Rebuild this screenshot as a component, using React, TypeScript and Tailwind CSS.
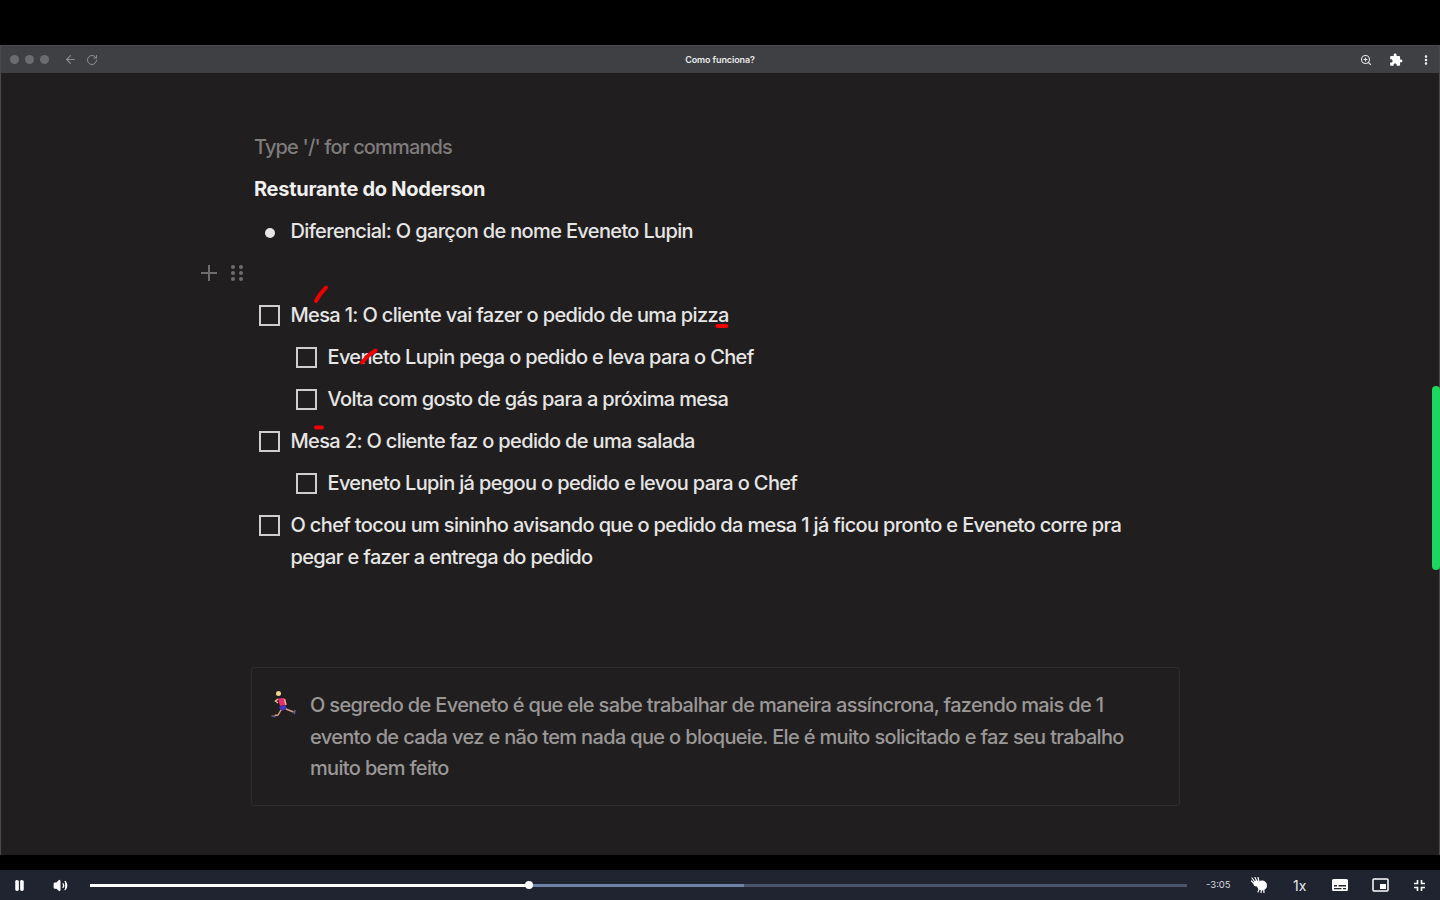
import { ArrowLeft, MoreVertical, Pause, RotateCw, Volume2, ZoomIn } from 'lucide-react'

const font = { fontFamily: 'Inter, sans-serif' }

const CheckRow = ({ text, nested = false }: { text: string; nested?: boolean }) => (
  <div className={`flex items-start ${nested ? 'pl-[42px]' : 'pl-[5px]'}`}>
    <span className="mt-[6px] h-[21px] w-[21px] shrink-0 border-2 border-[#cfcecd]" />
    <p className="ml-[10.500px] w-[860px] text-[20px] font-medium leading-[32px] tracking-[-0.65px] text-[#e6e6e5]">{text}</p>
  </div>
)

const Mark = ({ className, d }: { className: string; d: string }) => (
  <svg className={`absolute ${className}`} width="20" height="20" viewBox="0 0 20 20" fill="none">
    <path d={d} stroke="#f00000" strokeWidth="4" strokeLinecap="round" />
  </svg>
)

const Runner = () => (
  <svg className="shrink-0" width="28" height="28" viewBox="0 0 28 28" fill="none">
    <circle cx="8.500" cy="3.500" r="2.500" fill="#ecd98e" />
    <path d="M8 8.500l6-.5 2 7-6 1z" fill="#ee2a6f" />
    <path d="M8 9l-2.500 2 2.500 2" stroke="#e8b98c" strokeWidth="1.500" />
    <path d="M14.500 9l1.500 6" stroke="#e8b98c" strokeWidth="1.400" />
    <path d="M9 17l6-2 2 4-6 2z" fill="#4b36c4" />
    <path d="M16 19l7.500 3" stroke="#d9a27b" strokeWidth="1.400" />
    <path d="M11 20l-3 5-3.500 .5" stroke="#d9a27b" strokeWidth="1.400" />
    <path d="M25 20l-.8 4" stroke="#5a5a8c" strokeWidth="1.800" />
    <path d="M1.500 25.500l4 1.500" stroke="#5a5a8c" strokeWidth="1.800" />
  </svg>
)

const Extension = () => (
  <svg className="ml-[17px]" width="14" height="14" viewBox="0 0 24 24" fill="white">
    <path d="M20.500 11H19V7c0-1.100-.9-2-2-2h-4V3.500C13 2.120 11.880 1 10.500 1S8 2.120 8 3.500V5H4c-1.100 0-1.990.9-1.990 2v3.800H3.500c1.490 0 2.700 1.210 2.700 2.700s-1.210 2.700-2.700 2.700H2V20c0 1.100.9 2 2 2h3.800v-1.500c0-1.490 1.210-2.700 2.700-2.700 1.490 0 2.700 1.210 2.700 2.700V22H17c1.100 0 2-.9 2-2v-4h1.500c1.380 0 2.500-1.120 2.500-2.500S21.880 11 20.500 11z" />
  </svg>
)

const Hands = () => (
  <svg width="18" height="16" viewBox="0 0 18 16" fill="white">
    <circle cx="11" cy="8.500" r="5" />
    <circle cx="5.500" cy="6.500" r="3" />
    <path d="M1 1l3 4M4 .5l2 4M7 .5l1 4M.5 4l3 3M7 15l1.500-4M10 16l.5-4M13 16l-.3-4" stroke="white" strokeWidth="1.200" strokeLinecap="round" />
  </svg>
)

const Subtitles = () => (
  <svg width="16" height="12" viewBox="0 0 16 12">
    <path fillRule="evenodd" d="M1.500 0h13A1.500 1.500 0 0 1 16 1.500v9a1.500 1.500 0 0 1-1.500 1.500h-13A1.500 1.500 0 0 1 0 10.500v-9A1.500 1.500 0 0 1 1.500 0zM2 6v1.500h3V6zm4.500 0v1.500H14V6zM2 9v1.300h7.500V9zm9 0v1.300h3V9z" fill="white" />
  </svg>
)

const Pip = () => (
  <svg width="17" height="14" viewBox="0 0 17 14" fill="none">
    <rect x="1" y="1" width="15" height="12" rx="1" stroke="white" strokeWidth="1.500" />
    <rect x="8" y="6" width="6" height="5" fill="white" />
  </svg>
)

const Shrink = () => (
  <svg width="11" height="11" viewBox="0 0 11 11" fill="none" stroke="white" strokeWidth="1.600">
    <path d="M3.500 0v3.500H0M7.500 0v3.500H11M3.500 11V7.500H0M7.500 11V7.500H11" />
  </svg>
)

export default function App() {
  return (
    <div className="relative flex h-[900px] w-[1440px] flex-col overflow-hidden bg-black" style={font}>
      <div className="mt-[45px] flex h-[810px] flex-col border border-b-0 border-[#4a4a4c] bg-[#211e1f]">
        <header className="relative flex h-[27px] shrink-0 items-center bg-[#3f4044] px-[7px] text-white">
          <div className="ml-[2px] flex items-center gap-[6px]">
            <span className="h-[9px] w-[9px] rounded-full bg-[#6b6c70]" />
            <span className="h-[9px] w-[9px] rounded-full bg-[#6b6c70]" />
            <span className="h-[9px] w-[9px] rounded-full bg-[#6b6c70]" />
          </div>
          <ArrowLeft className="ml-[15px] text-[#8d8e92]" size={13} strokeWidth={2} />
          <RotateCw className="ml-[9px] text-[#8d8e92]" size={12} strokeWidth={2} />
          <span className="absolute left-0 right-0 text-center text-[9px] font-semibold tracking-[-0.1px] text-[#e9e9ea]">Como funciona?</span>
          <div className="ml-auto flex items-center">
            <ZoomIn size={12} strokeWidth={2.200} className="text-[#e6e6e7]" />
            <Extension />
            <MoreVertical size={12} strokeWidth={3} className="ml-[17px] text-white" />
          </div>
        </header>

        <main className="relative flex-1 pl-[253px] pt-[58px]">
          <div className="flex w-[890px] flex-col gap-[10px]">
            <p className="text-[20px] font-medium leading-[32px] tracking-[-0.85px] text-[#7e7c7b]">Type '/' for commands</p>
            <p className="text-[20px] font-bold leading-[32px] tracking-[-0.27px] text-[#f0f0ef]">Resturante do Noderson</p>
            <div className="flex items-start pl-[11px]">
              <span className="mt-[13px] h-[10px] w-[10px] shrink-0 rounded-full bg-[#e6e6e5]" />
              <p className="ml-[15.500px] text-[20px] font-medium leading-[32px] tracking-[-0.65px] text-[#e6e6e5]">Diferencial: O garçon de nome Eveneto Lupin</p>
            </div>
            <div className="relative h-[32px]">
              <div className="absolute -left-[54px] top-[7px] flex items-center gap-[13px]">
                <svg width="18" height="18" viewBox="0 0 18 18" stroke="#6f6d6c" strokeWidth="2"><path d="M9 1v16M1 9h16" /></svg>
                <svg width="12" height="18" viewBox="0 0 12 18" fill="#6f6d6c">
                  <circle cx="2" cy="3" r="2" /><circle cx="10" cy="3" r="2" />
                  <circle cx="2" cy="9" r="2" /><circle cx="10" cy="9" r="2" />
                  <circle cx="2" cy="15" r="2" /><circle cx="10" cy="15" r="2" />
                </svg>
              </div>
            </div>
            <CheckRow text="Mesa 1: O cliente vai fazer o pedido de uma pizza" />
            <CheckRow nested text="Eveneto Lupin pega o pedido e leva para o Chef" />
            <CheckRow nested text="Volta com gosto de gás para a próxima mesa" />
            <CheckRow text="Mesa 2: O cliente faz o pedido de uma salada" />
            <CheckRow nested text="Eveneto Lupin já pegou o pedido e levou para o Chef" />
            <CheckRow text="O chef tocou um sininho avisando que o pedido da mesa 1 já ficou pronto e Eveneto corre pra pegar e fazer a entrega do pedido" />
          </div>

          <aside className="-ml-[3px] mt-[94px] flex h-[139px] w-[929px] rounded-[3px] border border-[#2f2c2d] pl-[18px] pt-[22px]">
            <Runner />
            <p className="ml-[12px] w-[830px] text-[20px] font-medium leading-[31.500px] tracking-[-0.66px] text-[#9a9897]">
              O segredo de Eveneto é que ele sabe trabalhar de maneira assíncrona, fazendo mais de 1 evento de cada vez e não tem nada que o bloqueie. Ele é muito solicitado e faz seu trabalho muito bem feito
            </p>
          </aside>
        </main>
      </div>

      {/* caneta vermelha e barra verde por cima do vídeo */}
      <Mark className="left-[311px] top-[284px]" d="M5 17L9 10.500 15 3.500" />
      <Mark className="left-[712px] top-[316px]" d="M5.500 10L14.500 10" />
      <Mark className="left-[358px] top-[347px]" d="M4 15.500L11 8 17.500 3.500" />
      <Mark className="left-[309px] top-[417px]" d="M7 10.500L13 10.500" />
      <span className="absolute left-[1432px] top-[386px] h-[184px] w-[8px] rounded-full bg-[#1ed760]" />

      <footer className="mt-[15px] flex h-[30px] items-center bg-[#1f2430] text-white">
        <Pause className="ml-[13px]" size={13} fill="white" strokeWidth={1.500} />
        <Volume2 className="ml-[27px]" size={15} fill="white" strokeWidth={2} />
        <div className="relative ml-[22px] h-[3px] w-[1097px] bg-[#4a5468]">
          <div className="absolute left-0 top-0 h-[3px] w-[654px] bg-[#6f82a8]" />
          <div className="absolute left-0 top-0 h-[3px] w-[439px] bg-white" />
          <span className="absolute left-[435px] -top-[2.500px] h-[8px] w-[8px] rounded-full bg-white" />
        </div>
        <span className="ml-[19px] w-[23px] text-[9.500px] text-[#d8dade]">-3:05</span>
        <span className="ml-[22px] flex w-[18px]"><Hands /></span>
        <span className="ml-[24px] text-[14px] text-[#e8e9eb]">1x</span>
        <span className="ml-[26px] flex"><Subtitles /></span>
        <span className="ml-[24px] flex"><Pip /></span>
        <span className="ml-[25px] flex"><Shrink /></span>
      </footer>
    </div>
  )
}
